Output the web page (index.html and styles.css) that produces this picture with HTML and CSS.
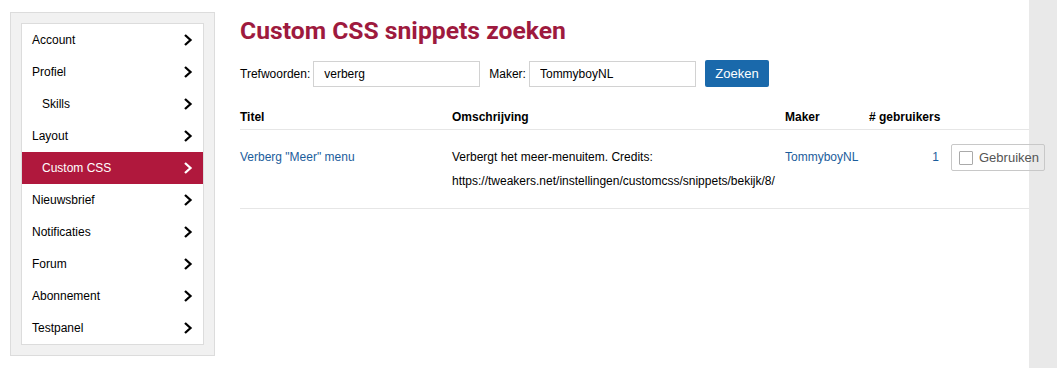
FILE: index.html
```html
<!DOCTYPE html>
<html lang="nl">
<head>
<meta charset="utf-8">
<title>Custom CSS snippets zoeken</title>
<link rel="stylesheet" href="styles.css">
</head>
<body>
<div class="page">
  <aside class="sidebar">
    <ul class="menu">
      <li class="item"><span>Account</span><svg class="chev" viewBox="0 0 10 12"><polyline points="2,1 7.5,6 2,11"/></svg></li>
      <li class="item"><span>Profiel</span><svg class="chev" viewBox="0 0 10 12"><polyline points="2,1 7.5,6 2,11"/></svg></li>
      <li class="item sub"><span>Skills</span><svg class="chev" viewBox="0 0 10 12"><polyline points="2,1 7.5,6 2,11"/></svg></li>
      <li class="item"><span>Layout</span><svg class="chev" viewBox="0 0 10 12"><polyline points="2,1 7.5,6 2,11"/></svg></li>
      <li class="item sub active"><span>Custom CSS</span><svg class="chev" viewBox="0 0 10 12"><polyline points="2,1 7.5,6 2,11"/></svg></li>
      <li class="item"><span>Nieuwsbrief</span><svg class="chev" viewBox="0 0 10 12"><polyline points="2,1 7.5,6 2,11"/></svg></li>
      <li class="item"><span>Notificaties</span><svg class="chev" viewBox="0 0 10 12"><polyline points="2,1 7.5,6 2,11"/></svg></li>
      <li class="item"><span>Forum</span><svg class="chev" viewBox="0 0 10 12"><polyline points="2,1 7.5,6 2,11"/></svg></li>
      <li class="item"><span>Abonnement</span><svg class="chev" viewBox="0 0 10 12"><polyline points="2,1 7.5,6 2,11"/></svg></li>
      <li class="item"><span>Testpanel</span><svg class="chev" viewBox="0 0 10 12"><polyline points="2,1 7.5,6 2,11"/></svg></li>
    </ul>
  </aside>
  <main class="content">
    <h1 class="title">Custom CSS snippets zoeken</h1>
    <form class="search">
      <label class="lbl">Trefwoorden:</label>
      <input class="field" type="text" value="verberg">
      <label class="lbl lbl-maker">Maker:</label>
      <input class="field" type="text" value="TommyboyNL">
      <button class="btn" type="button">Zoeken</button>
    </form>
    <table class="results">
      <thead>
        <tr>
          <th class="c-title">Titel</th>
          <th class="c-desc">Omschrijving</th>
          <th class="c-maker">Maker</th>
          <th class="c-users">#&nbsp;gebruikers</th>
          <th class="c-act"></th>
        </tr>
      </thead>
      <tbody>
        <tr>
          <td><a class="link" href="#">Verberg "Meer" menu</a></td>
          <td>Verbergt het meer-menuitem. Credits:<br>https://tweakers.net/instellingen/customcss/snippets/bekijk/8/</td>
          <td><a class="link" href="#">TommyboyNL</a></td>
          <td class="num"><a class="link" href="#">1</a></td>
          <td class="act"><span class="use"><span class="box"></span>Gebruiken</span></td>
        </tr>
      </tbody>
    </table>
  </main>
</div>
</body>
</html>
```

FILE: styles.css
```css
html, body {
  margin: 0;
  padding: 0;
}
body {
  background: #e9e9e9;
  font-family: "Liberation Sans", Arial, sans-serif;
  font-size: 12px;
  color: #000;
}
.page {
  width: 1029px;
  height: 368px;
  background: #fff;
  display: flex;
  align-items: flex-start;
}
.sidebar {
  margin: 12px 0 0 10px;
  width: 183px;
  padding: 10px;
  background: #f1f1f1;
  border: 1px solid #dcdcdc;
}
.menu {
  list-style: none;
  margin: 0;
  padding: 0;
  background: #fff;
  border: 1px solid #dcdcdc;
}
.item {
  height: 32px;
  display: flex;
  align-items: center;
  justify-content: space-between;
  padding: 0 10px 0 10px;
}
.item.sub {
  padding-left: 20px;
}
.item.active {
  background: #b0183d;
  color: #fff;
}
.chev {
  width: 10px;
  height: 12px;
  fill: none;
  stroke: #000;
  stroke-width: 2.3;
}
.active .chev {
  stroke: #fff;
}
.content {
  margin-left: 25px;
  flex: 1;
  min-width: 0;
}
.title {
  margin: 16px 0 0 0;
  font-family: Roboto, "Liberation Sans", sans-serif;
  font-weight: 700;
  font-size: 24.7px;
  line-height: 30px;
  color: #9e1a3e;
}
.search {
  display: flex;
  align-items: center;
  margin-top: 14px;
  height: 27px;
}
.lbl {
  margin-right: 3px;
}
.lbl-maker {
  margin-left: 9px;
}
.field {
  box-sizing: border-box;
  width: 167px;
  height: 26px;
  border: 1px solid #d2d2d2;
  padding: 0 10px;
  font-family: "Liberation Sans", Arial, sans-serif;
  font-size: 12px;
  color: #000;
  outline: none;
}
.btn {
  margin-left: 9px;
  width: 64px;
  height: 27px;
  border: none;
  border-radius: 2px;
  background: #1a69ab;
  color: #fff;
  font-family: "Liberation Sans", Arial, sans-serif;
  font-size: 13px;
  padding: 0;
}
.results {
  margin-top: 18px;
  width: 789px;
  border-collapse: collapse;
  table-layout: fixed;
}
.c-title { width: 212px; }
.c-desc { width: 333px; }
.c-maker { width: 84px; }
.c-users { width: 76px; }
th {
  text-align: left;
  font-weight: 700;
  height: 24px;
  padding: 0 0 0 0;
  border-bottom: 1px solid #e6e6e6;
  white-space: nowrap;
}
td {
  vertical-align: top;
  padding: 15px 0 15px 0;
  line-height: 24px;
  border-bottom: 1px solid #e6e6e6;
  white-space: nowrap;
}
.link {
  color: #1b5d9c;
  text-decoration: none;
}
.num {
  text-align: right;
  padding-right: 6px;
}
.act {
  overflow: visible;
}
.use {
  display: inline-flex;
  align-items: center;
  box-sizing: border-box;
  width: 94px;
  height: 27px;
  margin-left: 6px;
  border: 1px solid #c8c8c8;
  border-radius: 2px;
  color: #555;
  font-size: 13px;
  padding-left: 7px;
  background: transparent;
  vertical-align: top;
  margin-top: -1px;
}
.box {
  width: 12px;
  height: 12px;
  border: 1px solid #aaa;
  border-radius: 1px;
  margin-right: 6px;
  background: #fff;
}
```
